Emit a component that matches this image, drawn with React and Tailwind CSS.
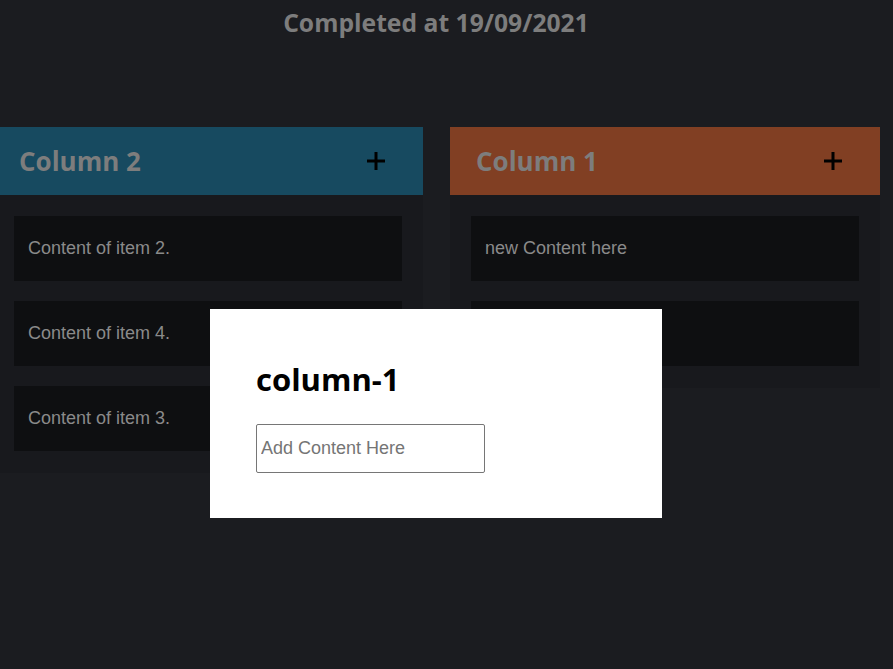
import React from "react";

const columns = [
    {
        id: "column-2",
        title: "Column 2",
        color: "bg-[#174a60]",
        items: ["Content of item 2.", "Content of item 4.", "Content of item 3."],
    },
    {
        id: "column-1",
        title: "Column 1",
        color: "bg-[#813f23]",
        items: ["new Content here", "Content of item 1."],
    },
];

function PlusIcon() {
    return (
        <svg width="20" height="20" viewBox="0 0 20 20" className="block">
            <path d="M10 1v18M1 10h18" stroke="#000" strokeWidth="3" />
        </svg>
    );
}

function Column({ column }) {
    return (
        <div className="w-[430px] flex-none">
            <div className={`${column.color} h-[68px] flex items-center justify-between pl-[26px] pr-[37px]`}>
                <h2 className="text-[26px] font-bold text-[#7d7d7d] font-['Open_Sans',sans-serif]">{column.title}</h2>
                <PlusIcon />
            </div>
            <div className="bg-[#18191d] px-[21px] pt-[21px] pb-[2px] flex flex-col">
                {column.items.map((item) => (
                    <div key={item} className="bg-[#0e0f11] h-[65px] mb-[20px] flex items-center px-[14px] text-[18px] text-[#8a8a8a] font-['Liberation_Sans',Arial,sans-serif]">
                        {item}
                    </div>
                ))}
            </div>
        </div>
    );
}

export default function App() {
    return (
        <div className="relative min-h-[669px] w-full bg-[#1b1c20] overflow-hidden">
            <h2 className="text-center text-[24.7px] font-bold text-[#7d7d7d] pt-[4px] pr-[21px] font-['Open_Sans',sans-serif]">
                Completed at 19/09/2021
            </h2>
            <div className="flex gap-[27px] mt-[86px] ml-[-7px] items-start">
                {columns.map((c) => (
                    <Column key={c.id} column={c} />
                ))}
            </div>

            {/* add item modal */}
            <div className="absolute left-[210px] top-[309px] w-[452px] h-[209px] bg-white px-[46px] pt-[50px]">
                <h1 className="text-[31px] font-bold text-black leading-[40px] font-['Open_Sans',sans-serif]">column-1</h1>
                <input
                    type="text"
                    placeholder="Add Content Here"
                    className="mt-[25px] w-[229px] h-[49px] border border-[#767676] rounded-[2px] px-[4px] text-[18px] text-black placeholder:text-[#757575] font-['Liberation_Sans',Arial,sans-serif] outline-none"
                />
            </div>
        </div>
    );
}
